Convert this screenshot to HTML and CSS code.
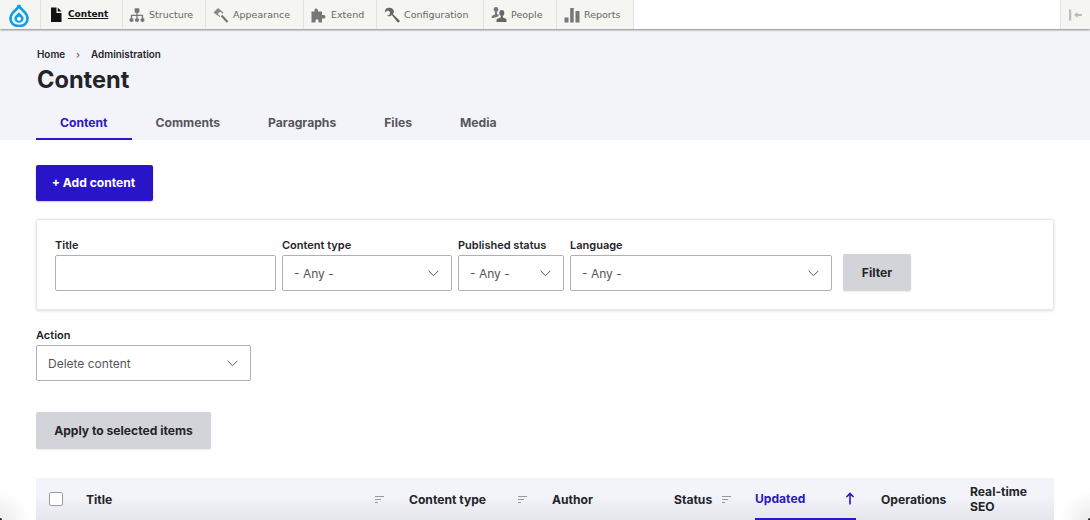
FILE: index.html
```html
<!DOCTYPE html>
<html lang="en">
<head>
<meta charset="utf-8">
<title>Content</title>
<link rel="stylesheet" href="styles.css">
</head>
<body>
<nav class="toolbar">
  <a class="logo"><svg width="20" height="24" viewBox="0 0 20 24"><path d="M10 1.800C10 5 6.500 6.500 4 9.500 2 12 1.400 13.600 1.400 15.300 1.400 20 5 23 10 23s8.600-3 8.600-7.700c0-1.700-.6-3.300-2.600-5.800C13.500 6.500 10 5 10 1.800Z" fill="none" stroke="#0f9fe8" stroke-width="2.700"/><path d="M10 8.500c0 2-4.600 3.800-4.600 7 0 2.600 2.100 4.300 4.600 4.300s4.600-1.700 4.600-4.300c0-3.200-4.600-5-4.600-7Z" fill="#0f9fe8"/><circle cx="10" cy="15.800" r="2.100" fill="#f5f5f2"/></svg></a>
  <a class="tool tool-active"><svg width="14" height="17" viewBox="0 0 14 17"><path d="M2 1.500h5.500v5.500H12.500v9H2Z M8.800 1.500 12.500 5.500H8.800Z" fill="#111"/></svg><span>Content</span></a>
  <a class="tool tool-tight"><svg width="16" height="16" viewBox="0 0 16 16"><rect x="5.600" y="1.200" width="4.800" height="4.600" rx=".8" fill="#777"/><path d="M8 5v6M2.500 12V8.400h11V12" fill="none" stroke="#777" stroke-width="1.300"/><circle cx="2.500" cy="13" r="2.100" fill="#777"/><circle cx="8" cy="13" r="2.100" fill="#777"/><circle cx="13.500" cy="13" r="2.100" fill="#777"/></svg><span>Structure</span></a>
  <a class="tool"><svg width="16" height="16" viewBox="0 0 16 16"><path d="M.5 5.500 5 1l5.500 4.500-4 4.500Z" fill="#888"/><path d="M7.200 4.500 10 7 7.500 9.500 4.800 7Z" fill="#f5f5f2"/><path d="M8.500 8.500 14.500 15" stroke="#777" stroke-width="2.200" fill="none"/></svg><span>Appearance</span></a>
  <a class="tool"><svg width="16" height="16" viewBox="0 0 16 16"><path d="M.5 4.500h3V3.300a1.700 1.700 0 1 1 3.400-.4L7 4.500h4V8h1.200a1.800 1.800 0 1 1 0 3.500H11v4H7.500v-1.700a1.500 1.500 0 0 0-3 0v1.700H.5Z" fill="#777"/></svg><span>Extend</span></a>
  <a class="tool"><svg width="16" height="16" viewBox="0 0 16 16"><path d="M5 .8a4 4 0 0 0-4.200 3.900l.1.500 2.900-1.700L6 5l-.4 2.700-2.600 1A4 4 0 0 0 7.800 8l5.300 6.800c.6.800 1.600.9 2.200.2.600-.6.500-1.500-.2-2.100L9 7.200A4 4 0 0 0 5 .8Z" fill="#666"/></svg><span>Configuration</span></a>
  <a class="tool"><svg width="16" height="17" viewBox="0 0 16 17"><circle cx="5" cy="3.500" r="2.400" fill="#777"/><path d="M4 5.500h2v2.500l2 1-1 1.500-4.500 1.500H.5c0-2 1-2.800 3.500-3.500Z" fill="#777"/><ellipse cx="10.800" cy="7" rx="2.500" ry="3" fill="#666"/><path d="M9.800 9.500h2v2c2 .5 3.700 1 3.700 2.500v2h-10v-2c0-1.500 2.300-2 4.300-2.500Z" fill="#666"/></svg><span>People</span></a>
  <a class="tool"><svg width="16" height="16" viewBox="0 0 16 16"><path d="M.5 10.500h4v5h-4ZM6.200 1h3.500v14.500H6.200ZM11.500 4h4v11.500h-4Z" fill="#777"/></svg><span>Reports</span></a>
  <span class="toolbar-gap"></span>
  <a class="toggle"><svg width="16" height="14" viewBox="0 0 16 14"><path d="M1 1.500h2.200v11H1Z" fill="#bbb"/><path d="M6 7 9.500 4v2H14v2H9.500v2Z" fill="#bbb"/></svg></a>
</nav>

<header class="page-head">
  <ol class="crumbs"><li>Home</li><li class="sep">›</li><li>Administration</li></ol>
  <h1>Content</h1>
  <ul class="tabs">
    <li class="tab tab-on">Content</li>
    <li class="tab">Comments</li>
    <li class="tab">Paragraphs</li>
    <li class="tab">Files</li>
    <li class="tab">Media</li>
  </ul>
</header>

<main class="main">
  <a class="btn btn-primary">+ Add content</a>
  <form class="filters">
    <div class="field f-title"><label>Title</label><input class="control" type="text"></div>
    <div class="field f-type"><label>Content type</label><div class="control select">- Any -<svg class="chev" width="11" height="7" viewBox="0 0 11 7"><path d="M.6.800 5.500 5.700 10.400.8"/></svg></div></div>
    <div class="field f-status"><label>Published status</label><div class="control select">- Any -<svg class="chev" width="11" height="7" viewBox="0 0 11 7"><path d="M.6.800 5.500 5.700 10.400.8"/></svg></div></div>
    <div class="field f-lang"><label>Language</label><div class="control select">- Any -<svg class="chev" width="11" height="7" viewBox="0 0 11 7"><path d="M.6.800 5.500 5.700 10.400.8"/></svg></div></div>
    <a class="btn btn-grey btn-filter">Filter</a>
  </form>
  <div class="field f-action"><label>Action</label><div class="control select">Delete content<svg class="chev" width="11" height="7" viewBox="0 0 11 7"><path d="M.6.800 5.500 5.700 10.400.8"/></svg></div></div>
  <a class="btn btn-grey btn-apply">Apply to selected items</a>
  <div class="thead">
    <div class="th c-check"><span class="check"></span></div>
    <div class="th c-title"><span>Title</span><svg class="sort" width="9" height="7" viewBox="0 0 9 7"><path d="M0 .5h9M0 3.500h6M0 6.500h3"/></svg></div>
    <div class="th c-type"><span>Content type</span><svg class="sort" width="9" height="7" viewBox="0 0 9 7"><path d="M0 .5h9M0 3.500h6M0 6.500h3"/></svg></div>
    <div class="th c-author"><span>Author</span></div>
    <div class="th c-status"><span>Status</span><svg class="sort" width="9" height="7" viewBox="0 0 9 7"><path d="M0 .5h9M0 3.500h6M0 6.500h3"/></svg></div>
    <div class="th c-updated"><span>Updated</span><svg width="10" height="13" viewBox="0 0 10 13"><path d="M5 12.500V1.500M1.500 5 5 1.500 8.500 5" fill="none" stroke="#2a17c8" stroke-width="1.600"/></svg></div>
    <div class="th c-ops"><span>Operations</span></div>
    <div class="th c-seo"><span>Real-time SEO</span></div>
  </div>
</main>
</body>
</html>
```
FILE: styles.css
```css
* { box-sizing: border-box; }
html, body { margin: 0; height: 520px; overflow: hidden; }
body { font-family: Inter, "Liberation Sans", sans-serif; color: #232429; background: #fff; position: relative; }
body::after {
  content: ""; position: absolute; left: 0; right: 0; bottom: 0; height: 40px; pointer-events: none;
  background:
    radial-gradient(circle at 0 100%, #222 0, #222 1.500px, rgba(0,0,0,.07) 2.500px, transparent 30px),
    radial-gradient(circle at 100% 100%, #222 0, #222 1.500px, rgba(0,0,0,.07) 2.500px, transparent 30px);
}
a { display: block; }

.toolbar {
  display: grid; grid-template-columns: 41px 82px 83px 98px 73px 107px 73px 77px 1fr 30px;
  height: 29px; background: #fff;
  box-shadow: 0 1px 2px rgba(0,0,0,.45);
  position: relative; z-index: 1;
  font-family: "DejaVu Sans", sans-serif; font-size: 9.500px; color: #666;
}
.logo { background: #f5f5f2; border-right: 1px solid #e4e4df; display: flex; align-items: center; justify-content: center; }
.logo svg { margin-left: -3px; }
.tool { display: flex; align-items: center; gap: 4px; padding-left: 7px; background: #f5f5f2; border-right: 1px solid #e4e4df; white-space: nowrap; }
.tool svg { flex: none; }
.tool span { margin-bottom: 1px; }
.tool-tight { padding-left: 6px; }
.tool-active { color: #111; font-weight: 600; font-size: 9px; padding-left: 8px; gap: 5px; }
.tool-active span { text-decoration: underline; }
.toggle { background: #f5f5f2; border-left: 1px solid #e4e4df; display: flex; align-items: center; justify-content: center; }

.page-head { height: 111px; background: #f3f4f9; padding: 19px 36px 0; }
.crumbs { display: flex; list-style: none; margin: 0; padding: 0 0 0 1px; font-size: 9.900px; font-weight: 600; line-height: 13px; color: #232429; }
.crumbs .sep { margin: 0 11px; color: #55565b; font-weight: 500; }
h1 { margin: 3px 0 0 1px; font-size: 23.600px; font-weight: 700; line-height: 32px; color: #232429; }
.tabs { display: flex; list-style: none; margin: 9px 0 0; padding: 0; }
.tab { height: 35px; padding: 0 24px; line-height: 36px; font-size: 12.150px; font-weight: 700; color: #55565b; }
.tab-on { color: #2a17c8; border-bottom: 2px solid #2a17c8; }

.main { padding: 25px 36px 0; }
.btn { border-radius: 2px; font-weight: 700; font-size: 12.100px; text-align: center; }
.btn-primary { width: 117px; height: 36px; padding-right: 2px; line-height: 36px; background: #2a14c8; color: #fff; box-shadow: 0 1px 2px rgba(0,0,0,.2); }
.btn-grey { background: #d3d4d9; color: #232429; box-shadow: 0 1px 2px rgba(0,0,0,.08); }

.filters {
  display: flex; align-items: flex-end; gap: 6px;
  height: 91px; margin-top: 18px; padding: 18px;
  border: 1px solid #e6e7ec; border-radius: 2px; box-shadow: 0 1px 3px rgba(0,0,0,.14);
}
.field label { display: block; font-size: 11px; font-weight: 600; line-height: 13px; margin-bottom: 3px; }
.control { display: block; width: 100%; height: 36px; border: 1px solid #aeafba; border-radius: 2px; background: #fff; }
.select { display: flex; align-items: center; justify-content: space-between; padding: 0 12px 0 11px; font-size: 12px; color: #55565b; }
.chev { fill: none; stroke: #55565b; stroke-width: 1; flex: none; }
.f-title { width: 221px; }
.f-type { width: 170px; }
.f-status { width: 106px; }
.f-lang { width: 262px; }
.btn-filter { width: 68px; height: 37px; line-height: 37px; margin-left: 5px; }

.f-action { width: 215px; margin-top: 19px; }
.btn-apply { width: 175px; height: 37px; line-height: 37px; margin-top: 31px; }

.thead { display: flex; height: 42px; margin-top: 29px; background: linear-gradient(#f3f4f9 40%, #e6e7ec); font-size: 12.100px; font-weight: 700; }
.th { display: flex; align-items: center; justify-content: space-between; padding-right: 8px; line-height: 15px; }
.check { display: block; width: 14px; height: 14px; border: 1px solid #9a9ba5; border-radius: 2px; background: #fff; margin-left: 13px; }
.sort { fill: none; stroke: #999; stroke-width: 1; }
.c-check { width: 50px; padding: 0; }
.c-title { width: 323px; padding-right: 25px; }
.c-type { width: 143px; padding-right: 25px; }
.c-author { width: 122px; }
.c-status { width: 81px; padding-right: 24px; }
.c-updated { width: 101px; padding-right: 1px; color: #2a17c8; border-bottom: 2px solid #2a17c8; }
.c-ops { width: 89px; margin-left: 25px; }
.c-seo { width: 70px; }
```
